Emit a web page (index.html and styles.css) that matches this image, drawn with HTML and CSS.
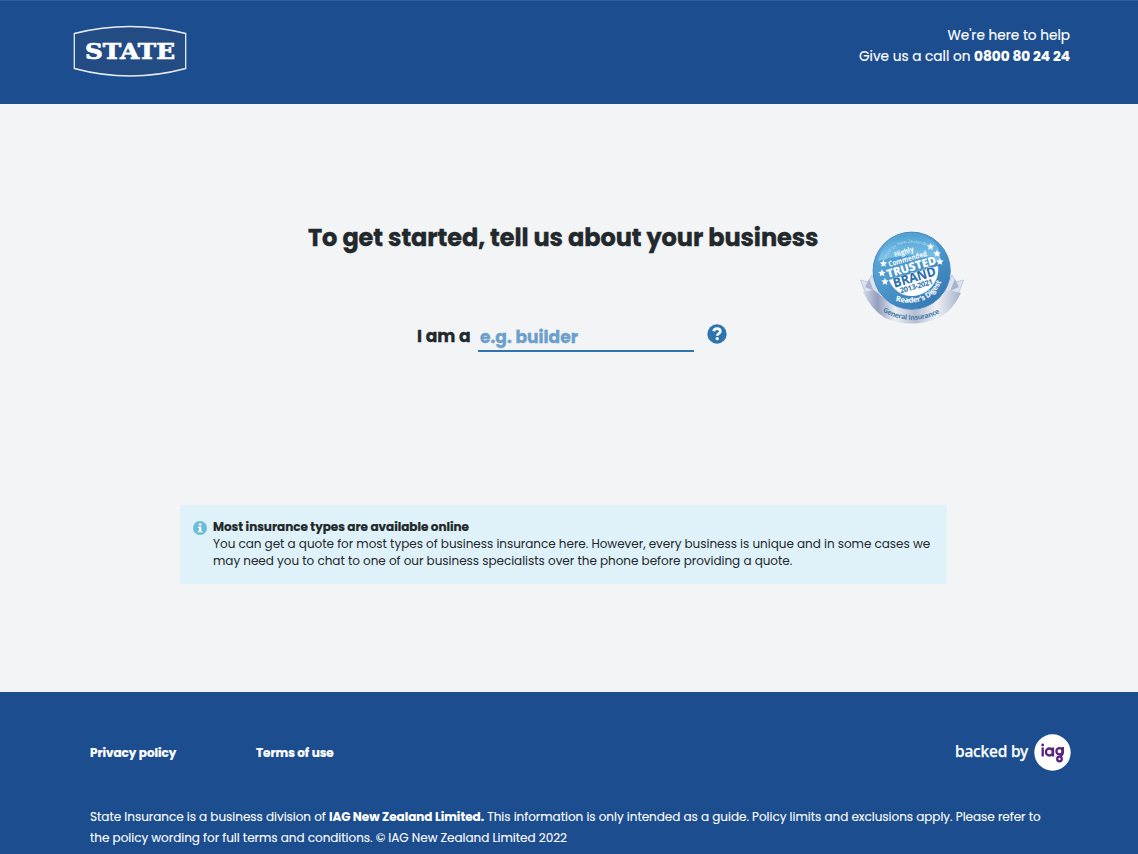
FILE: index.html
```html
<!DOCTYPE html>
<html lang="en">
<head>
<meta charset="utf-8">
<title>State Insurance - Business</title>
<link rel="stylesheet" href="styles.css">
</head>
<body>
<header class="header">
  <svg class="logo" width="114" height="52" viewBox="0 0 114 52" role="img" aria-label="State">
    <path class="logo-frame" d="M1.300 8.500Q57-5.500 112.700 8.500V43.500Q57 58.500 1.300 43.500Z"/>
    <text class="logo-text" x="12" y="34.300" textLength="90" lengthAdjust="spacingAndGlyphs">STATE</text>
  </svg>
  <div class="contact">
    <div class="contact-lead">We're here to help</div>
    <div class="contact-call">Give us a call on <b>0800 80 24 24</b></div>
  </div>
</header>
<main class="main">
  <section class="intro">
    <div class="question">
      <h1 class="title">To get started, tell us about your business</h1>
      <div class="field">
        <label class="label" for="occupation">I am a</label>
        <input class="input" id="occupation" placeholder="e.g. builder">
        <svg class="help" width="20" height="20" viewBox="0 0 20 20" aria-label="Help">
          <circle cx="10" cy="10" r="9.700" fill="#2e75b0"/>
          <path d="M6.600 7.300C7 5.300 8.300 4.600 10 4.600C12 4.600 13.300 5.800 13.300 7.400C13.300 9.500 10.200 9.500 10.200 11.800" fill="none" stroke="#fff" stroke-width="2.700"/>
          <circle cx="10.200" cy="14.700" r="1.600" fill="#fff"/>
        </svg>
      </div>
    </div>
    <svg class="badge" width="104" height="94" viewBox="860 231 104 94" role="img" aria-label="Trusted Brand award">
      <defs>
        <linearGradient id="ribbon" x1="0" x2="1">
          <stop offset="0" stop-color="#d4dbe8"/><stop offset=".15" stop-color="#939ebd"/>
          <stop offset=".33" stop-color="#e9edf5"/><stop offset=".53" stop-color="#b4bdd2"/>
          <stop offset=".75" stop-color="#eef1f6"/><stop offset="1" stop-color="#a6b0ca"/>
        </linearGradient>
        <linearGradient id="disc" x1="0" x2=".7" y1="0" y2="1">
          <stop offset="0" stop-color="#64afdb"/><stop offset=".5" stop-color="#4d99cd"/><stop offset="1" stop-color="#3679b5"/>
        </linearGradient>
        <linearGradient id="gloss" x1="0" x2="0" y1="0" y2="1">
          <stop offset="0" stop-color="#4f9fd3"/><stop offset="1" stop-color="#83c9ec"/>
        </linearGradient>
        <path id="star" d="M0-3.800L1.100-1.200L3.800-1.100L1.700.7L2.300 3.300L0 1.900L-2.300 3.300L-1.700.7L-3.800-1.100L-1.100-1.200Z"/>
        <path id="ribbon-line" d="M882.500 311.500Q911 328 942 312"/>
        <path id="digest-line" d="M895.500 301Q931 309 942.500 279"/>
        <path id="voted-line" d="M885 260.500Q897 234 931 247.500"/>
      </defs>
      <path d="M860.500 280L868 282L872 275L877 285L880 297L865 292Z" fill="#dce3ef" stroke="#a8b4ce" stroke-width=".6"/>
      <path d="M963.500 280L956 282L952 275L947 285L944 297L959 292Z" fill="#dce3ef" stroke="#a8b4ce" stroke-width=".6"/>
      <path d="M869 279L874 291L865 287Z" fill="#a9b5cf"/>
      <path d="M955 279L950 291L959 287Z" fill="#a9b5cf"/>
      <path d="M863 292L874 290Q911 323 949 290L961 293Q953 310 939 318Q911 329 885 318Q871 309 863 292Z" fill="url(#ribbon)"/>
      <circle cx="911.700" cy="270.700" r="38.600" fill="url(#disc)" stroke="#448abd"/>
      <path d="M878 261C884 238 905 229 922 235C938 241 944 254 938 263C918 251 899 255 878 261Z" fill="url(#gloss)"/>
      <path d="M889 280L938 266C940 280 930 294 914 296C902 297 893 290 889 280Z" fill="#fff"/>
      <text class="badge-title" transform="translate(895 257.300) rotate(-17)" textLength="20" lengthAdjust="spacingAndGlyphs">Highly</text>
      <text class="badge-title" transform="translate(889.300 266.800) rotate(-16)" textLength="39.500" lengthAdjust="spacingAndGlyphs">Commended</text>
      <text class="badge-trusted" transform="translate(888 278) rotate(-16.500)" textLength="51" lengthAdjust="spacingAndGlyphs">TRUSTED</text>
      <text class="badge-brand" transform="translate(894.500 287.700) rotate(-16.500)" textLength="44" lengthAdjust="spacingAndGlyphs">BRAND</text>
      <text class="badge-years" transform="translate(900.800 293.300) rotate(-16)" textLength="34">2013-2021</text>
      <g fill="#fff">
        <use href="#star" x="883.500" y="263.500"/><use href="#star" x="882" y="273"/><use href="#star" x="885" y="281.500"/>
        <use href="#star" x="930.500" y="246.700"/><use href="#star" x="937" y="253.500"/><use href="#star" x="940" y="261.500"/>
      </g>
      <text class="badge-voted"><textPath href="#voted-line">Voted by New Zealanders</textPath></text>
      <text class="badge-digest"><textPath href="#digest-line" textLength="55">Reader's Digest</textPath></text>
      <text class="badge-ribbon"><textPath href="#ribbon-line" textLength="60">General Insurance</textPath></text>
    </svg>
  </section>
  <section class="notice">
    <svg class="info" width="14" height="14" viewBox="0 0 14 14" aria-hidden="true">
      <circle cx="7" cy="7" r="7" fill="#6dbcd9"/>
      <circle cx="7.100" cy="3.500" r="1.300" fill="#fff"/>
      <path d="M5 5.700H8.300V9.900H9.300V11.200H4.900V9.900H6V7H5Z" fill="#fff"/>
    </svg>
    <div>
      <div class="notice-title">Most insurance types are available online</div>
      <div class="notice-first">You can get a quote for most types of business insurance here. However, every business is unique and in some cases we</div>
      <div class="notice-second">may need you to chat to one of our business specialists over the phone before providing a quote.</div>
    </div>
  </section>
</main>
<footer class="footer">
  <div class="footer-top">
    <nav class="links"><a class="privacy">Privacy policy</a><a class="terms">Terms of use</a></nav>
    <div class="backed">
      <span class="backed-text">backed by</span>
      <svg width="37" height="37" viewBox="0 0 37 37" role="img" aria-label="iag">
        <circle cx="18.500" cy="18.500" r="18.200" fill="#fff"/>
        <g fill="none" stroke="#56237f" stroke-width="2.300">
          <path d="M8.700 13.500V22.500M19 13.500V22.500M28.800 13V18.500Q28.800 21 26 21.800"/>
          <circle cx="15.400" cy="18" r="3.500"/><circle cx="25.500" cy="17.300" r="3.100"/>
          <circle cx="25.500" cy="25" r="2.300"/>
        </g>
        <circle cx="8.700" cy="11" r="1.400" fill="#56237f"/>
      </svg>
    </div>
  </div>
  <div class="legal">
    <div class="legal-first">State Insurance is a business division of <b>IAG New Zealand Limited.</b> This information is only intended as a guide. Policy limits and exclusions apply. Please refer to</div>
    <div class="legal-second">the policy wording for full terms and conditions. © IAG New Zealand Limited 2022</div>
  </div>
</footer>
</body>
</html>
```
FILE: styles.css
```css
* { box-sizing: border-box; }
body {
  margin: 0;
  height: 854px;
  overflow: hidden;
  display: flex;
  flex-direction: column;
  background: #f2f4f6;
  color: #22282b;
  font-family: Poppins, Inter, "Open Sans", sans-serif;
  white-space: nowrap;
}
.header {
  height: 104px;
  flex: none;
  display: flex;
  justify-content: space-between;
  align-items: flex-start;
  padding: 24px 68px 0 73px;
  background: #1b4d8f;
  border-top: 1px solid #30609a;
  color: #fff;
}
.logo-frame { fill: #234c85; stroke: #e9eef5; stroke-width: 1.3; }
.logo-text { font: bold 22.500px "DejaVu Serif", serif; fill: #fff; stroke: #fff; stroke-width: .7px; }
.contact { padding-top: 1px; font-size: 13.650px; line-height: 20.500px; text-align: right; -webkit-text-stroke: .15px; }
.main { height: 588px; flex: none; padding: 112px 170px 0 180px; }
.intro { display: flex; gap: 42px; padding-left: 128px; height: 289px; }
.question { width: 510px; }
.title { margin: 0; padding-top: 3px; font-size: 24px; line-height: 37px; font-weight: 700; letter-spacing: -.06px; -webkit-text-stroke: .4px; }
.field { display: flex; align-items: flex-start; padding: 67px 0 0 109px; }
.label { width: 61px; font-size: 17.100px; line-height: 26px; font-weight: 700; -webkit-text-stroke: .3px; }
.input {
  width: 216px;
  height: 29px;
  margin: 0 13px 0 0;
  padding: 0 2px;
  border: 0;
  border-bottom: 2px solid #2e75b0;
  background: transparent;
  font: 700 17.100px Poppins, Inter, sans-serif;
  -webkit-text-stroke: .3px;
}
.input::placeholder { color: #6ca0cb; opacity: 1; }
.help { margin-top: 1px; }
.badge { margin-top: 15px; flex: none; }
.badge-title, .badge-digest { font: bold 7.500px "Open Sans", sans-serif; fill: #fff; }
.badge-voted { font: 4.500px "Open Sans", sans-serif; fill: #b9def3; }
.badge-trusted { font: 800 11.500px "Open Sans", sans-serif; fill: #fff; stroke: #4c99cf; stroke-width: 1.200px; paint-order: stroke; }
.badge-brand { font: bold 13px "Open Sans", sans-serif; fill: #286eac; stroke: #fff; stroke-width: .8px; paint-order: stroke; }
.badge-years { font: bold 7.500px "Open Sans", sans-serif; fill: #3577ac; }
.badge-ribbon { font: bold 7px "Open Sans", sans-serif; fill: #4b7da5; }
.notice {
  width: 767px;
  height: 79px;
  display: flex;
  gap: 6px;
  padding: 13px 13px 0;
  background: #dff2f9;
  font-size: 12px;
  line-height: 17px;
  letter-spacing: -.03px;
}
.info { margin-top: 3px; flex: none; }
.notice-title { font-weight: 700; -webkit-text-stroke: .2px; }
.footer { height: 162px; flex: none; padding: 41px 67px 0 90px; background: #1b4d8f; color: #fff; }
.footer-top { display: flex; justify-content: space-between; align-items: center; height: 38px; }
.links { display: flex; padding-top: 2px; font-size: 12px; font-weight: 700; letter-spacing: -.05px; -webkit-text-stroke: .2px; }
.privacy { width: 166px; }
.backed { display: flex; align-items: center; gap: 6px; }
.backed-text { padding-bottom: 3px; font: 500 15.500px/20px "Noto Sans", sans-serif; letter-spacing: -.2px; -webkit-text-stroke: .25px; }
.legal { margin-top: 36px; font-size: 12px; line-height: 20.500px; letter-spacing: -.032px; -webkit-text-stroke: .1px; }
```
